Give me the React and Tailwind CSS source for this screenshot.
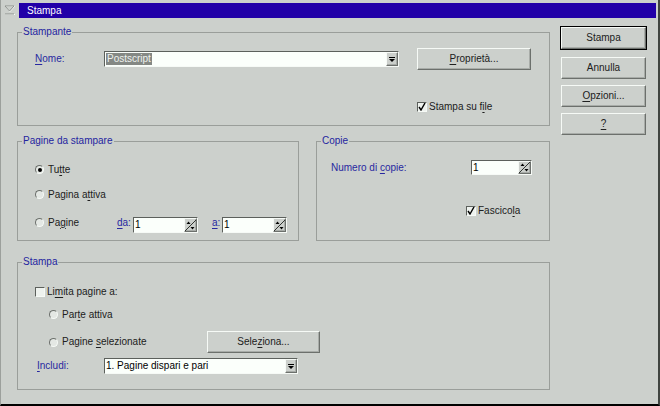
import clsx from "clsx";

const raised =
  "border border-t-[#f6faf6] border-l-[#f6faf6] border-r-[#6c706c] border-b-[#6c706c] shadow-[inset_-1px_-1px_0_#a8aca8]";
const sunken =
  "border border-t-[#5c605c] border-l-[#5c605c] border-r-[#f6faf6] border-b-[#f6faf6]";

function Btn({ children, className }) {
  return (
    <div className={clsx("flex items-center justify-center bg-[#ccd0cc] text-[#202020]", raised, className)}>
      {children}
    </div>
  );
}

function U({ children }) {
  return <span className="underline underline-offset-[2px]">{children}</span>;
}

function Radio({ checked }) {
  return (
    <span className="flex h-[9px] w-[9px] shrink-0 items-center justify-center rounded-full border border-t-[#6c706c] border-l-[#6c706c] border-r-[#f6faf6] border-b-[#f6faf6] bg-[#e4e8e4]">
      {checked && <span className="h-[4px] w-[4px] rounded-full bg-black" />}
    </span>
  );
}

function Check({ checked }) {
  return (
    <span className={clsx("flex h-[10px] w-[10px] shrink-0 items-center justify-center bg-[#eef2ee]", sunken)}>
      {checked && (
        <svg width="8" height="8" viewBox="0 0 8 8">
          <path d="M1 4 L3 7 L7 0" stroke="#000" strokeWidth="1.4" fill="none" />
        </svg>
      )}
    </span>
  );
}

function Combo({ className, children }) {
  return (
    <div className={clsx("flex bg-[#fbfffb]", sunken, className)}>
      <div className="flex flex-1 items-center overflow-hidden pl-[1px] text-black">{children}</div>
      <div className={clsx("flex w-[12px] items-center justify-center bg-[#ccd0cc]", raised)}>
        <svg width="6" height="5" viewBox="0 0 6 5">
          <rect x="0" y="0" width="6" height="1" fill="#000" />
          <path d="M0 2 H6 L3 5 Z" fill="#000" />
        </svg>
      </div>
    </div>
  );
}

function Spin({ className }) {
  return (
    <div className={clsx("flex bg-[#fbfffb]", sunken, className)}>
      <div className="flex flex-1 items-center pl-[1px] text-black">1</div>
      <div className={clsx("flex w-[13px] items-center justify-center bg-[#ccd0cc]", raised)}>
        <svg width="11" height="11" viewBox="0 0 11 11">
          <line x1="0" y1="11" x2="11" y2="0" stroke="#303430" strokeWidth="1" />
          <path d="M1.5 4 L3.5 1.5 L5.5 4 Z" fill="#000" />
          <path d="M5.5 7 L9.5 7 L7.5 9.5 Z" fill="#000" />
        </svg>
      </div>
    </div>
  );
}

function Group({ title, className, children }) {
  return (
    <fieldset className={clsx("border border-[#9a9e9a]", className)}>
      <legend className="ml-[4px] px-[1px] leading-[12px] text-[#2424a0]">{title}</legend>
      {children}
    </fieldset>
  );
}

const blue = "text-[#2828a0]";

export default function App() {
  return (
    <div className="h-[406px] w-[660px] overflow-hidden border-l border-r-2 border-b-2 border-l-[#9ca09c] border-r-[#404440] border-b-black bg-[#ccd0cc] font-['Liberation_Sans',Arial,sans-serif] text-[10px] leading-[12px] text-[#202020]">
      <div className="flex items-center pt-[3px]">
        <div className="flex h-[15px] w-[18px] items-center justify-center">
          <svg width="12" height="11" viewBox="0 0 12 11">
            <path d="M1.5 1.5 H10.5 L6 6.5 Z" fill="none" stroke="#f6faf6" />
            <path d="M1 1 H10 L5.5 6 Z" fill="none" stroke="#8c908c" />
            <line x1="1" y1="9.5" x2="11" y2="9.5" stroke="#f6faf6" />
            <line x1="1" y1="9" x2="10" y2="9" stroke="#8c908c" />
          </svg>
        </div>
        <div className="mr-[2px] flex h-[15px] flex-1 items-center bg-[#2200a8] pl-[8px] text-white">Stampa</div>
      </div>

      <div className="flex items-start pl-[16px]">
        <div className="w-[533px]">
          <Group title="Stampante" className="mt-[8px] h-[100px] w-full">
            <div className="pt-[10px]">
              <div className="flex h-[22px] items-center pl-[17px]">
                <span className={clsx("w-[69px]", blue)}>
                  <U>N</U>ome:
                </span>
                <Combo className="h-[16px] w-[295px]">
                  <span className="bg-[#848884] px-[1px] text-[#eef2ee]">Postscript</span>
                </Combo>
                <Btn className="ml-[18px] h-[22px] w-[114px]">
                  <span>
                    <U>P</U>roprietà...
                  </span>
                </Btn>
              </div>
              <div className="mt-[30px] flex h-[13px] items-center pl-[399px]">
                <Check checked />
                <span className="ml-[2px]">
                  Stampa su f<U>i</U>le
                </span>
              </div>
            </div>
          </Group>

          <div className="mt-[9px] flex gap-[17px]">
            <Group title="Pagine da stampare" className="h-[106px] w-[282px]">
              <div className="pt-[16px]">
                <div className="flex h-[13px] items-center pl-[17px]">
                  <Radio checked />
                  <span className="ml-[4px]">
                    Tu<U>t</U>te
                  </span>
                </div>
                <div className="mt-[12px] flex h-[13px] items-center pl-[17px]">
                  <Radio />
                  <span className="ml-[4px]">
                    Pagina a<U>t</U>tiva
                  </span>
                </div>
                <div className="mt-[15px] flex items-start pl-[17px]">
                  <div className="flex h-[13px] w-[82px] items-center">
                    <Radio />
                    <span className="ml-[4px]">
                      Pa<U>g</U>ine
                    </span>
                  </div>
                  <span className={clsx("w-[16px] leading-[13px]", blue)}>
                    <U>d</U>a:
                  </span>
                  <Spin className="mt-[1px] h-[16px] w-[65px]" />
                  <span className={clsx("ml-[14px] w-[10px] leading-[13px]", blue)}>
                    <U>a</U>:
                  </span>
                  <Spin className="mt-[1px] h-[16px] w-[65px]" />
                </div>
              </div>
            </Group>

            <Group title="Copie" className="h-[106px] w-[234px]">
              <div className="pt-[13px]">
                <div className="flex h-[15px] items-center pl-[14px]">
                  <span className={clsx("w-[140px]", blue)}>
                    Numero di <U>c</U>opie:
                  </span>
                  <Spin className="h-[15px] w-[61px]" />
                </div>
                <div className="mt-[29px] flex h-[13px] items-center pl-[149px]">
                  <Check checked />
                  <span className="ml-[2px]">
                    Fascico<U>l</U>a
                  </span>
                </div>
              </div>
            </Group>
          </div>

          <Group title="Stampa" className="mt-[15px] h-[134px] w-full">
            <div className="pt-[17px]">
              <div className="flex h-[13px] items-center pl-[17px]">
                <Check />
                <span className="ml-[2px]">
                  Li<U>m</U>ita pagine a:
                </span>
              </div>
              <div className="mt-[10px] flex h-[13px] items-center pl-[31px]">
                <Radio />
                <span className="ml-[4px]">
                  Par<U>t</U>e attiva
                </span>
              </div>
              <div className="mt-[10px] flex h-[22px] items-center pl-[31px]">
                <div className="flex w-[158px] items-center">
                  <Radio />
                  <span className="ml-[4px]">
                    Pagine <U>s</U>elezionate
                  </span>
                </div>
                <Btn className="h-[22px] w-[113px]">
                  <span>
                    Sele<U>z</U>iona...
                  </span>
                </Btn>
              </div>
              <div className="mt-[5px] flex h-[16px] items-center pl-[19px]">
                <span className={clsx("w-[67px]", blue)}>
                  <U>I</U>ncludi:
                </span>
                <Combo className="h-[16px] w-[194px]">
                  <span>1. Pagine dispari e pari</span>
                </Combo>
              </div>
            </div>
          </Group>
        </div>

        <div className="ml-[10px] mt-[8px] flex w-[87px] flex-col">
          <div className="border border-black">
            <Btn className="h-[22px] w-full">Stampa</Btn>
          </div>
          <Btn className="mx-[1px] mt-[7px] h-[22px]">Annulla</Btn>
          <Btn className="mx-[1px] mt-[6px] h-[22px]">
            <span>
              <U>O</U>pzioni...
            </span>
          </Btn>
          <Btn className="mx-[1px] mt-[6px] h-[22px]">
            <U>?</U>
          </Btn>
        </div>
      </div>
    </div>
  );
}
